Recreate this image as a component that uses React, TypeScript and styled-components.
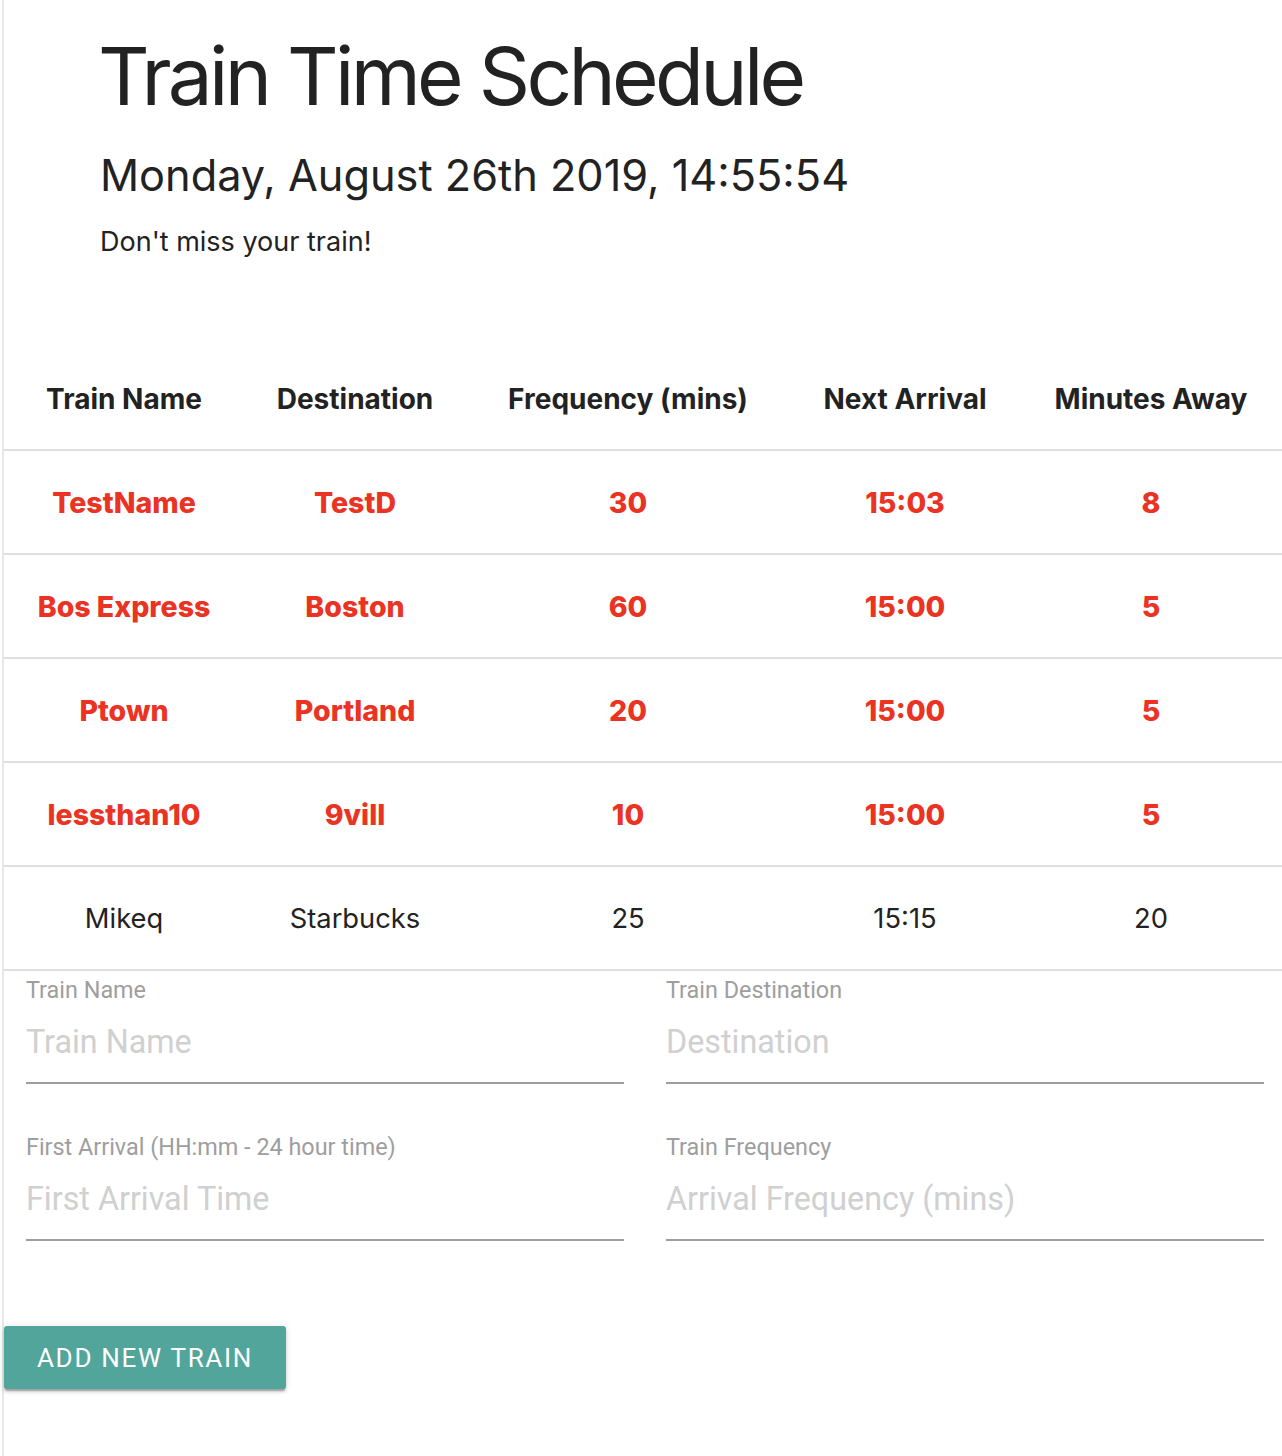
import React from "react";
import styled, { createGlobalStyle } from "styled-components";

const Global = createGlobalStyle`
  html, body { margin: 0; padding: 0; background: #fff; }
  body { font-family: Inter, "Noto Sans", sans-serif; color: #222; }
`;

const Page = styled.div`
  margin-left: 2px;
  border-left: 2px solid #e8e8e8;
  min-height: 1456px;
  box-sizing: border-box;
`;

const Header = styled.header`
  padding: 26px 0 0 96px;
  display: flex;
  flex-direction: column;
`;

const Title = styled.h1`
  margin: 0 0 0 -2px;
  font-family: Inter, sans-serif;
  font-weight: 400;
  font-size: 80px;
  line-height: 100px;
  letter-spacing: -3.7px;
  color: #222;
`;

const DateLine = styled.h3`
  margin: 22px 0 0;
  font-family: Inter, sans-serif;
  font-weight: 400;
  font-size: 43.3px;
  line-height: 54px;
  color: #222;
`;

const Tagline = styled.p`
  margin: 22px 0 0;
  font-family: Inter, sans-serif;
  font-size: 27px;
  line-height: 36px;
  color: #222;
`;

const Table = styled.table`
  margin-top: 88px;
  width: 100%;
  border-collapse: collapse;
  table-layout: fixed;
`;

const Th = styled.th`
  height: 101px;
  padding: 0;
  font-family: Inter, sans-serif;
  font-weight: 700;
  font-size: 28px;
  text-align: center;
  color: #222;
`;

const Tr = styled.tr`
  border-top: 2px solid #e0e0e0;
`;

const HeadRow = styled.tr`
  border-bottom: 2px solid #e0e0e0;
`;

const Td = styled.td<{ $alert: boolean }>`
  height: 102px;
  padding: 0;
  text-align: center;
  font-family: Inter, sans-serif;
  font-size: ${(p) => (p.$alert ? "28.5px" : "27.3px")};
  font-weight: ${(p) => (p.$alert ? 800 : 400)};
  color: ${(p) => (p.$alert ? "#ea3323" : "#222")};
`;

const Form = styled.form`
  border-top: 2px solid #e0e0e0;
  display: grid;
  grid-template-columns: 598px 598px;
  column-gap: 42px;
  row-gap: 48px;
  padding: 4px 0 0 22px;
`;

const Field = styled.div`
  display: flex;
  flex-direction: column;
`;

const Label = styled.label`
  font-family: Roboto, sans-serif;
  font-size: 23.4px;
  line-height: 30px;
  color: #9e9e9e;
`;

const Input = styled.input`
  margin-top: 8px;
  border: none;
  border-bottom: 2px solid #9e9e9e;
  outline: none;
  padding: 0 0 11px;
  height: 71px;
  box-sizing: border-box;
  font-family: Roboto, sans-serif;
  font-size: 32.3px;
  color: #222;
  background: transparent;
  &::placeholder { color: #d0d0d0; }
`;

const Button = styled.button`
  margin-top: 85px;
  width: 282px;
  height: 63px;
  border: none;
  border-radius: 3px;
  background: #52a59a;
  color: #fff;
  font-family: Roboto, sans-serif;
  font-size: 26px;
  letter-spacing: 1.7px;
  text-transform: uppercase;
  box-shadow: 0 3px 3px 0 rgba(0,0,0,0.14), 0 1px 7px 0 rgba(0,0,0,0.12), 0 3px 1px -1px rgba(0,0,0,0.2);
  cursor: pointer;
`;

const rows = [
  ["TestName", "TestD", "30", "15:03", "8"],
  ["Bos Express", "Boston", "60", "15:00", "5"],
  ["Ptown", "Portland", "20", "15:00", "5"],
  ["lessthan10", "9vill", "10", "15:00", "5"],
  ["Mikeq", "Starbucks", "25", "15:15", "20"],
];

const widths = [240, 222, 324, 230, 262];

export default function App() {
  return (
    <Page>
      <Global />
      <Header>
        <Title>Train Time Schedule</Title>
        <DateLine>Monday, August 26th 2019, 14:55:54</DateLine>
        <Tagline>Don't miss your train!</Tagline>
      </Header>
      <Table>
        <colgroup>
          {widths.map((w, i) => (
            <col key={i} style={{ width: w }} />
          ))}
        </colgroup>
        <thead>
          <HeadRow>
            <Th>Train Name</Th>
            <Th>Destination</Th>
            <Th>Frequency (mins)</Th>
            <Th>Next Arrival</Th>
            <Th>Minutes Away</Th>
          </HeadRow>
        </thead>
        <tbody>
          {rows.map((r, i) => {
            const alert = Number(r[4]) < 10;
            return (
              <Tr key={i}>
                {r.map((c, j) => (
                  <Td key={j} $alert={alert}>{c}</Td>
                ))}
              </Tr>
            );
          })}
        </tbody>
      </Table>
      <Form onSubmit={(e) => e.preventDefault()}>
        <Field>
          <Label>Train Name</Label>
          <Input placeholder="Train Name" />
        </Field>
        <Field>
          <Label>Train Destination</Label>
          <Input placeholder="Destination" />
        </Field>
        <Field>
          <Label>First Arrival (HH:mm - 24 hour time)</Label>
          <Input placeholder="First Arrival Time" />
        </Field>
        <Field>
          <Label>Train Frequency</Label>
          <Input placeholder="Arrival Frequency (mins)" />
        </Field>
      </Form>
      <Button type="button">Add New Train</Button>
    </Page>
  );
}
